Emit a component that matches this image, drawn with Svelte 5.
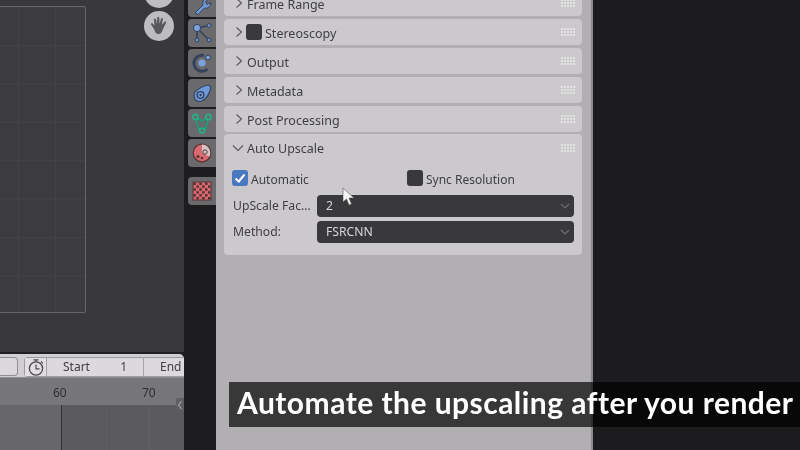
<script>
  const closedPanels = [
    { name: 'Stereoscopy', check: true },
    { name: 'Output' },
    { name: 'Metadata' },
    { name: 'Post Processing' }
  ];
</script>

{#snippet grip()}
  <svg class="grip" width="14" height="8" viewBox="0 0 14 8">
    {#each [1, 4, 7] as y}
      {#each [1, 4, 7, 10, 13] as x}
        <rect x={x - 1} y={y - 1} width="2" height="2" fill="#e4e3e4" />
      {/each}
    {/each}
  </svg>
{/snippet}

{#snippet chevron()}
  <svg class="chev" width="8" height="12" viewBox="0 0 8 12">
    <path d="M1.5 1.5 L6.5 6 L1.5 10.5" fill="none" stroke="#5d5c5e" stroke-width="1.2" />
  </svg>
{/snippet}

<div class="screen">
  <div class="left">
    <div class="viewport">
      <div class="frame"></div>
      <div class="gizmo gizmo-top"></div>
      <div class="gizmo gizmo-hand">
        <svg width="22" height="22" viewBox="0 0 22 22">
          <path d="M6 14 L3 9.5 C2.5 8.5 4 7.8 4.8 8.8 L6.5 10.5 L6 4.5 C6 3.2 7.8 3.2 8 4.5 L8.8 9 L9.3 2.8 C9.4 1.5 11.2 1.5 11.3 2.8 L11.5 9 L13 3.8 C13.3 2.6 15 3 14.8 4.2 L13.8 10 L16.5 6.8 C17.3 6 18.6 6.8 18 7.9 L15 14 C14 17 13 19 10.5 19 C8 19 7 17 6 14 Z" fill="#59585a" />
        </svg>
      </div>
    </div>
    <div class="timeline">
      <div class="tl-header">
        <div class="tl-pill"></div>
        <div class="tl-range">
          <div class="tl-clock">
            <svg width="18" height="19" viewBox="0 0 18 19">
              <circle cx="9" cy="10.5" r="6.6" fill="none" stroke="#4a494b" stroke-width="1.3" />
              <path d="M9 6.5 V10.8 H12.5 M6.5 1.8 H11.5 M9 2 V4 M14 3.5 L15.8 5.3" fill="none" stroke="#4a494b" stroke-width="1.2" />
            </svg>
          </div>
          <div class="tl-field tl-start"><span>Start</span><span>1</span></div>
          <div class="tl-field tl-end"><span>End</span></div>
        </div>
      </div>
      <div class="tl-ruler">
        <span class="tick-60">60</span>
        <span class="tick-70">70</span>
        <div class="tl-handle">
          <svg width="6" height="10" viewBox="0 0 6 10"><path d="M4.5 1 L1.5 5 L4.5 9" fill="none" stroke="#a9a8aa" stroke-width="1.1" /></svg>
        </div>
      </div>
      <div class="tl-tracks">
        <div class="playhead"></div>
      </div>
    </div>
  </div>

  <div class="tabs">
    <div class="tab tab-first">
      <svg width="22" height="22" viewBox="0 0 22 22">
        <path d="M4 20 L12 12 C11 8 13.5 5 17.5 5.5 L14.5 9 L16 11.5 L19.8 9.5 C20 13.5 16.5 16 13.5 15 L7 21.5 Z" fill="#6f98d6" stroke="#34425e" stroke-width="1" />
      </svg>
    </div>
    <div class="tab">
      <svg width="22" height="22" viewBox="0 0 22 22">
        <path d="M6 6 L18 3.5 M6 6 L18 18 M6 6 L6 18" stroke="#34425e" stroke-width="1.6" />
        <circle cx="6" cy="6" r="3.6" fill="#7aa2dc" stroke="#34425e" />
        <circle cx="18" cy="3.5" r="1.9" fill="#6f98d6" stroke="#34425e" />
        <circle cx="18" cy="18" r="1.9" fill="#6f98d6" stroke="#34425e" />
        <circle cx="6" cy="18" r="1.9" fill="#6f98d6" stroke="#34425e" />
      </svg>
    </div>
    <div class="tab">
      <svg width="22" height="22" viewBox="0 0 22 22">
        <path d="M16.5 17 A8 8 0 1 1 13 3.5" fill="none" stroke="#34425e" stroke-width="3" />
        <circle cx="11" cy="11" r="3.6" fill="#7aa2dc" />
        <circle cx="17" cy="5.5" r="2.4" fill="#7aa2dc" stroke="#34425e" />
      </svg>
    </div>
    <div class="tab">
      <svg width="22" height="22" viewBox="0 0 22 22">
        <path d="M3 13 C3 9 11 4 17 3 C20 3 20 6 19 9 C17 14 14 19 9 19.5 C5 19.5 3 17 3 13 Z" fill="#6f98d6" stroke="#34425e" stroke-width="1.2" />
        <circle cx="9.5" cy="13" r="3.4" fill="none" stroke="#34425e" stroke-width="1.4" />
        <circle cx="9.5" cy="13" r="1.2" fill="#34425e" />
      </svg>
    </div>
    <div class="tab">
      <svg width="22" height="22" viewBox="0 0 22 22">
        <path d="M4 4.5 L11 9 L18 4.5 L14 18 H8 Z" fill="none" stroke="#1f9b74" stroke-width="2" />
        <circle cx="4.5" cy="5" r="2.6" fill="#6a696b" stroke="#26b088" stroke-width="1.6" />
        <circle cx="17.5" cy="5" r="2.6" fill="#6a696b" stroke="#26b088" stroke-width="1.6" />
        <circle cx="11" cy="18.5" r="2.4" fill="#6a696b" stroke="#26b088" stroke-width="1.6" />
      </svg>
    </div>
    <div class="tab">
      <svg width="22" height="22" viewBox="0 0 22 22">
        <circle cx="11" cy="11" r="8.8" fill="#d96a70" stroke="#5b3337" stroke-width="1.2" />
        <path d="M11 2.5 A8.5 8.5 0 0 1 18.5 14.5 L11 11 Z" fill="#d3c4c6" />
        <circle cx="14" cy="10" r="2.2" fill="none" stroke="#5b3337" />
        <circle cx="7" cy="14.5" r="1.6" fill="#5b3337" />
        <circle cx="11" cy="16" r="1.3" fill="#5b3337" />
      </svg>
    </div>
    <div class="tab tab-texture">
      <svg width="20" height="20" viewBox="0 0 20 20">
        <rect x="1" y="1" width="18" height="18" fill="#d9686e" stroke="#5b3337" />
        {#each [0, 1, 2, 3, 4, 5] as r}
          {#each [0, 1, 2, 3, 4, 5] as c}
            {#if (r + c) % 2 === 0}
              <rect x={1.5 + c * 2.9} y={1.5 + r * 2.9} width="2.4" height="2.4" fill="#4a2f33" />
            {/if}
          {/each}
        {/each}
      </svg>
    </div>
  </div>

  <div class="props">
    <div class="panel panel-cut">
      {@render chevron()}
      <span class="title">Frame Range</span>
      {@render grip()}
    </div>
    {#each closedPanels as panel}
      <div class="panel">
        {@render chevron()}
        {#if panel.check}<span class="box box-inline"></span>{/if}
        <span class="title" class:tight={panel.check}>{panel.name}</span>
        {@render grip()}
      </div>
    {/each}
    <div class="open">
      <div class="open-head">
        <svg class="chev-down" width="12" height="8" viewBox="0 0 12 8">
          <path d="M1 1.5 L6 6.5 L11 1.5" fill="none" stroke="#5d5c5e" stroke-width="1.2" />
        </svg>
        <span class="title">Auto Upscale</span>
        {@render grip()}
      </div>
      <div class="checks">
        <div class="check">
          <span class="box box-on">
            <svg width="16" height="16" viewBox="0 0 16 16">
              <path d="M3.5 8.5 L6.8 11.5 L12.5 4.5" fill="none" stroke="#fff" stroke-width="2" />
            </svg>
          </span>
          <span>Automatic</span>
        </div>
        <div class="check">
          <span class="box"></span>
          <span>Sync Resolution</span>
        </div>
      </div>
      <div class="field-row">
        <span class="label">UpScale Fac...</span>
        <div class="select">
          <span>2</span>
          <svg width="10" height="6" viewBox="0 0 10 6"><path d="M1 1 L5 5 L9 1" fill="none" stroke="#6f6e70" stroke-width="1.2" /></svg>
        </div>
      </div>
      <div class="field-row">
        <span class="label">Method:</span>
        <div class="select">
          <span>FSRCNN</span>
          <svg width="10" height="6" viewBox="0 0 10 6"><path d="M1 1 L5 5 L9 1" fill="none" stroke="#6f6e70" stroke-width="1.2" /></svg>
        </div>
      </div>
      <svg class="cursor" width="14" height="20" viewBox="0 0 14 20">
        <path d="M1 1 L1 15 L4.5 12 L7 18 L9.5 17 L7 11 L12 11 Z" fill="#f4f4f4" stroke="#555" stroke-width="0.6" />
      </svg>
    </div>
  </div>

  <div class="right"></div>

  <div class="caption">Automate the upscaling after you render</div>
</div>

<style>
  :global(body) {
    margin: 0;
    background: #1c1b1d;
  }
  .screen {
    position: relative;
    width: 800px;
    height: 450px;
    overflow: hidden;
    display: flex;
    font-family: 'Noto Sans', 'DejaVu Sans', sans-serif;
    color: #3f3e40;
    filter: blur(0.45px);
  }
  .left {
    width: 184px;
    flex: none;
    display: flex;
    flex-direction: column;
  }
  .viewport {
    position: relative;
    height: 352px;
    flex: none;
    background: #39383a;
    overflow: hidden;
    border-bottom: 2px solid #201f21;
  }
  .frame {
    width: 106px;
    height: 307px;
    margin: 6px 0 0 -20px;
    border: 1px solid #666567;
    box-sizing: border-box;
    border-radius: 2px;
    background-color: #3c3b3d;
    background-image:
      linear-gradient(#434244 1px, transparent 1px),
      linear-gradient(90deg, #434244 1px, transparent 1px);
    background-size: 37px 38.4px;
    background-position: 0 38px;
  }
  .gizmo {
    position: absolute;
    left: 144px;
    width: 30px;
    height: 30px;
    border-radius: 50%;
    background: #bdbcbe;
    display: flex;
    align-items: center;
    justify-content: center;
  }
  .gizmo-top { top: -22px; }
  .gizmo-hand { top: 11px; }
  .timeline {
    flex: 1;
    display: flex;
    flex-direction: column;
    border-top-right-radius: 5px;
    overflow: hidden;
    background: #5d5c5e;
  }
  .tl-header {
    height: 24px;
    flex: none;
    display: flex;
    gap: 6px;
    background: #d1cfd1;
    padding: 3px 0 1px;
    box-sizing: border-box;
    border-bottom: 1px solid #8f8e90;
  }
  .tl-pill {
    width: 18px;
    height: 19px;
    background: #dbd9db;
    border: 1px solid #8f8e90;
    border-left: none;
    border-radius: 0 4px 4px 0;
    box-sizing: border-box;
  }
  .tl-range {
    flex: 1;
    display: flex;
    height: 20px;
    border: 1px solid #9b9a9c;
    border-right: none;
    border-radius: 4px 0 0 4px;
    background: #dbd9db;
    box-sizing: border-box;
    font-size: 12px;
  }
  .tl-clock {
    width: 21px;
    flex: none;
    display: flex;
    align-items: center;
    justify-content: center;
    border-right: 1px solid #a5a4a6;
    background: #e0dee0;
  }
  .tl-field {
    display: flex;
    align-items: center;
    box-sizing: border-box;
    margin-top: -1px;
  }
  .tl-start {
    width: 97px;
    flex: none;
    padding: 0 16px 0 16px;
    justify-content: space-between;
    border-right: 1px solid #a5a4a6;
  }
  .tl-end { padding-left: 16px; white-space: nowrap; }
  .tl-ruler {
    height: 27px;
    flex: none;
    position: relative;
    z-index: 1;
    background: #777678;
    font-size: 12px;
    color: #2f2e30;
  }
  .tick-60 { position: absolute; left: 53px; top: 6px; }
  .tick-70 { position: absolute; left: 142px; top: 6px; }
  .tl-handle {
    position: absolute;
    right: 0;
    top: 20px;
    width: 8px;
    height: 13px;
    background: #5f5e60;
    border-radius: 2px 0 0 2px;
    display: flex;
    align-items: center;
    justify-content: center;
  }
  .tl-tracks {
    flex: 1;
    position: relative;
    background:
      linear-gradient(90deg, transparent 106px, #5f5e60 106px, #5f5e60 107px, transparent 107px, transparent 149px, #636264 149px, #636264 150px, transparent 150px),
      linear-gradient(90deg, #676668 62px, #5b5a5c 62px);
  }
  .playhead {
    position: absolute;
    left: 61px;
    top: 0;
    bottom: 0;
    width: 1px;
    background: #333234;
  }
  .tabs {
    width: 32px;
    flex: none;
    box-sizing: border-box;
    padding-left: 4px;
    background: #1d1c1e;
    display: flex;
    flex-direction: column;
    gap: 2px;
    margin-top: -10px;
  }
  .tab {
    height: 28px;
    flex: none;
    background: #6a696b;
    border-radius: 4px 0 0 4px;
    display: flex;
    align-items: center;
    justify-content: center;
  }
  .tab-first { height: 27px; }
  .tab-texture { margin-top: 8px; }
  .props {
    width: 377px;
    flex: none;
    box-sizing: border-box;
    padding: 0 11px 0 8px;
    background: #b1afb1;
    display: flex;
    flex-direction: column;
    gap: 3px;
    margin-top: -10px;
    box-shadow: inset -2px 0 1px #8a898b;
  }
  .panel {
    height: 26px;
    flex: none;
    box-sizing: border-box;
    background: #cbc9cb;
    border-radius: 4px;
    display: flex;
    align-items: center;
    padding: 0 7px 0 11px;
    font-size: 12.5px;
  }
  .chev { margin-right: 4px; flex: none; }
  .title { flex: 1; padding-top: 2px; }
  .title.tight { margin-left: 3px; }
  .grip { flex: none; }
  .box {
    width: 16px;
    height: 16px;
    flex: none;
    border-radius: 3px;
    background: #39383a;
    display: flex;
  }
  .box-inline { margin-left: -1px; }
  .box-on { background: #4a78c0; }
  .open {
    position: relative;
    flex: none;
    height: 121px;
    background: #cbc9cb;
    border-radius: 4px;
    margin-top: -1px;
    box-sizing: border-box;
    padding: 0 7px 0 5px;
    font-size: 12px;
  }
  .open-head {
    height: 28px;
    display: flex;
    align-items: center;
    gap: 3px;
    font-size: 12.5px;
    padding-left: 3px;
  }
  .open-head .title { padding-top: 0; }
  .checks {
    display: grid;
    grid-template-columns: 175px 1fr;
    margin: 7px 0 0 3px;
  }
  .check {
    display: flex;
    align-items: center;
    gap: 3px;
    height: 18px;
    font-size: 12px;
  }
  .check span + span { padding-top: 2px; }
  .field-row {
    display: flex;
    align-items: center;
    height: 22px;
    padding-left: 4px;
  }
  .field-row + .field-row { margin-top: 4px; }
  .checks + .field-row { margin-top: 8px; }
  .label {
    width: 84px;
    flex: none;
    font-size: 12.2px;
    white-space: nowrap;
    padding-bottom: 2px;
  }
  .select {
    flex: 1;
    margin-right: 1px;
    height: 22px;
    box-sizing: border-box;
    border-radius: 4px;
    background: #39383a;
    color: #d8d7d9;
    display: flex;
    align-items: center;
    justify-content: space-between;
    padding: 0 4px 0 9px;
    font-size: 12.2px;
  }
  .select span { padding-bottom: 2px; }
  .cursor {
    position: absolute;
    left: 118px;
    top: 53px;
  }
  .right {
    flex: 1;
    background: #1c1b1d;
  }
  .caption {
    position: absolute;
    left: 229px;
    right: 0;
    top: 382px;
    height: 45px;
    box-sizing: border-box;
    padding-left: 8px;
    line-height: 41px;
    background: rgba(0, 0, 0, 0.68);
    color: #fff;
    font-family: Lato, 'Open Sans', sans-serif;
    font-weight: 700;
    font-size: 30px;
    letter-spacing: 0.47px;
    white-space: nowrap;
  }
</style>
